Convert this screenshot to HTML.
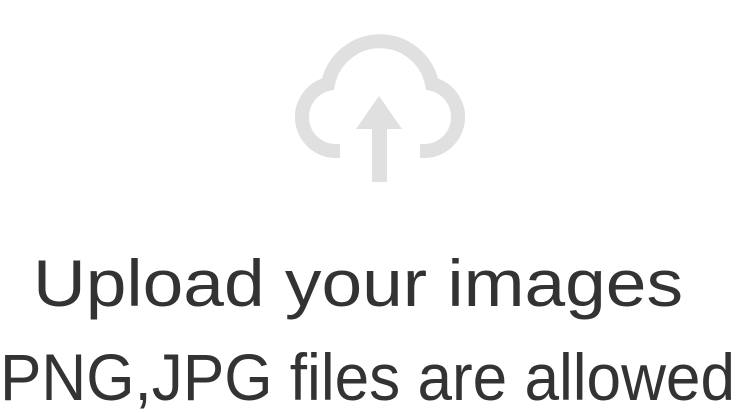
<!DOCTYPE html>
<html><head><meta charset="utf-8"><style>
html,body{margin:0;padding:0;background:#fff;width:756px;height:413px;overflow:hidden}
</style></head><body>
<svg width="756" height="413" viewBox="0 0 756 413" xmlns="http://www.w3.org/2000/svg">
<path d="M340,151 H334 A34,34 0 0 1 328,84 A53,53 0 0 1 432,84 A34,34 0 0 1 426,151 H420" fill="none" stroke="#e0e0e0" stroke-width="14"/>
<polygon points="379,96 356,129 402,129" fill="#e0e0e0"/>
<rect x="372" y="125" width="15" height="57" fill="#e0e0e0"/>
<text x="33" y="306" font-family="Liberation Sans, sans-serif" font-size="66" font-weight="500" fill="#333" textLength="650" lengthAdjust="spacingAndGlyphs">Upload your images</text>
<text x="0" y="400" font-family="Liberation Sans, sans-serif" font-size="66" fill="#333" textLength="735" lengthAdjust="spacingAndGlyphs">PNG,JPG files are allowed</text>
</svg>
</body></html>
